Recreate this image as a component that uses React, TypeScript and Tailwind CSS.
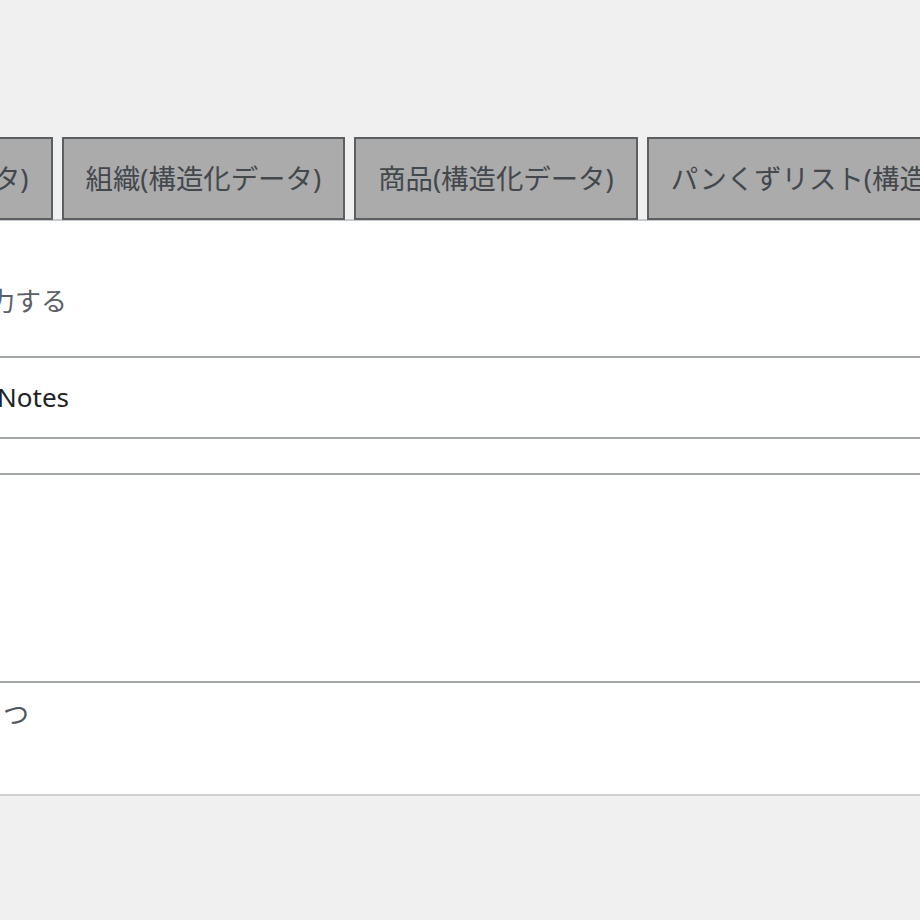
const tabs = [
  "記事(構造化データ)",
  "組織(構造化データ)",
  "商品(構造化データ)",
  "パンくずリスト(構造化データ)",
];

const jp = "font-['Noto_Sans','Noto_Sans_CJK_JP',sans-serif]";

export default function App() {
  return (
    <div className={`w-[920px] h-[920px] overflow-hidden bg-[#f0f0f0] ${jp}`}>
      {/* タブ */}
      <div className="pt-[137px] border-b-2 border-[#c8c9cc]">
        <div className="flex gap-[9px] -ml-[231px] w-max -mb-[1px]">
          {tabs.map((t) => (
            <div
              key={t}
              className="h-[83px] px-[22px] flex items-center whitespace-nowrap bg-[#ababab] border-2 border-[#5c5f62] text-[27.4px] text-[#43484d]"
            >
              {t}
            </div>
          ))}
        </div>
      </div>

      {/* 設定パネル */}
      <div className="bg-white border-b-2 border-[#cfd0d2] text-[26px]">
        <div className="h-[137px] flex items-end pb-[35px] border-b-2 border-[#a3a6aa]">
          <span className="-ml-[37px] text-[#5a6067] whitespace-nowrap">出力する</span>
        </div>
        <div className="h-[81px] flex items-center border-b-2 border-[#a3a6aa]">
          <span className="-ml-[3px] text-[#1d2327]">Notes</span>
        </div>
        <div className="h-[36px] border-b-2 border-[#a3a6aa]" />
        <div className="h-[208px] border-b-2 border-[#a3a6aa]" />
        <div className="h-[111px] pt-[12px]">
          <span className="ml-[3px] text-[#50575e]">つ</span>
        </div>
      </div>
    </div>
  );
}
